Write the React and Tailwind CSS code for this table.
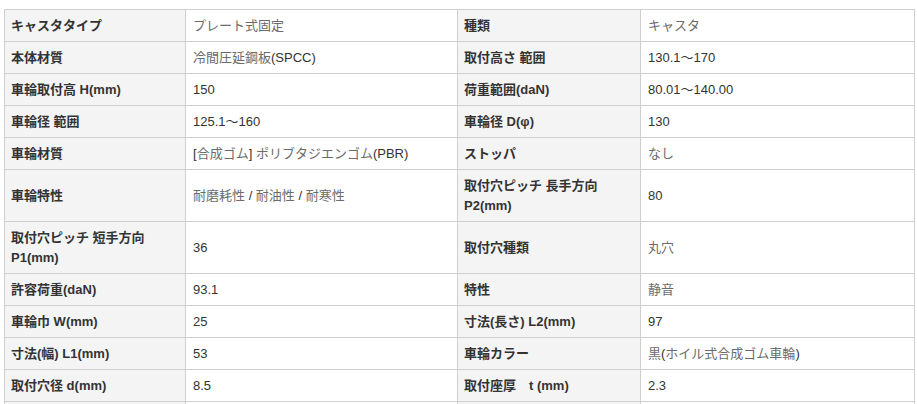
import React from 'react';

const rows = [
  ['キャスタタイプ', 'プレート式固定', '種類', 'キャスタ'],
  ['本体材質', '冷間圧延鋼板(SPCC)', '取付高さ 範囲', '130.1〜170'],
  ['車輪取付高 H(mm)', '150', '荷重範囲(daN)', '80.01〜140.00'],
  ['車輪径 範囲', '125.1〜160', '車輪径 D(φ)', '130'],
  ['車輪材質', '[合成ゴム] ポリブタジエンゴム(PBR)', 'ストッパ', 'なし'],
  ['車輪特性', '耐磨耗性 / 耐油性 / 耐寒性', ['取付穴ピッチ 長手方向', 'P2(mm)'], '80'],
  [['取付穴ピッチ 短手方向', 'P1(mm)'], '36', '取付穴種類', '丸穴'],
  ['許容荷重(daN)', '93.1', '特性', '静音'],
  ['車輪巾 W(mm)', '25', '寸法(長さ) L2(mm)', '97'],
  ['寸法(幅) L1(mm)', '53', '車輪カラー', '黒(ホイル式合成ゴム車輪)'],
  ['取付穴径 d(mm)', '8.5', '取付座厚\u3000t (mm)', '2.3'],
  ['', '', '', ''],
];

// CJK runs in the value cells render lighter in the original
const Value = ({ text }) => {
  const parts = text.split(/([\u3040-\u30ff\u4e00-\u9fff]+)/);
  return parts.map((p, i) =>
    /[\u3040-\u30ff\u4e00-\u9fff]/.test(p)
      ? <span key={i} className="text-[#6b6b6b]">{p}</span>
      : <span key={i}>{p}</span>
  );
};

const Label = ({ text }) =>
  Array.isArray(text)
    ? text.map((t, i) => <div key={i}>{t}</div>)
    : text;

export default function App() {
  return (
    <div className="w-[917px] h-[404px] overflow-hidden bg-white pl-[4px] pt-[9px]">
      <table
        className="w-[910px] table-fixed border-collapse text-[13px] leading-[20px] text-[#333]"
        style={{ fontFamily: '"Liberation Sans", Arial, "Noto Sans CJK JP", sans-serif' }}
      >
        <colgroup>
          <col className="w-[181px]" />
          <col className="w-[272px]" />
          <col className="w-[183px]" />
          <col className="w-[274px]" />
        </colgroup>
        <tbody>
          {rows.map((r, i) => (
            <tr key={i}>
              <th className="border border-[#cfcfcf] bg-[#f4f4f4] pl-[6px] pr-2 pt-[6px] pb-[5px] text-left align-middle font-bold">
                <Label text={r[0]} />
              </th>
              <td className="border border-[#cfcfcf] pl-[7px] pr-2 pt-[6px] pb-[5px] align-middle">
                <Value text={r[1]} />
              </td>
              <th className="border border-[#cfcfcf] bg-[#f4f4f4] pl-[6px] pr-2 pt-[6px] pb-[5px] text-left align-middle font-bold">
                <Label text={r[2]} />
              </th>
              <td className="border border-[#cfcfcf] pl-[7px] pr-2 pt-[6px] pb-[5px] align-middle">
                <Value text={r[3]} />
              </td>
            </tr>
          ))}
        </tbody>
      </table>
    </div>
  );
}
